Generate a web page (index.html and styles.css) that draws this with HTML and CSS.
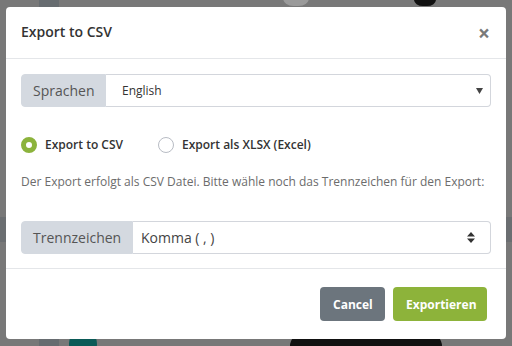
FILE: index.html
```html
<!DOCTYPE html>
<html lang="de">
<head>
    <meta charset="UTF-8">
    <meta name="viewport" content="width=device-width, initial-scale=1.0">
    <title>Export to CSV</title>
    <link rel="stylesheet" href="styles.css">
</head>
<body>

    <!-- page behind the overlay -->
    <div class="backdrop">
        <div class="bg-tab bg-tab-top"></div>
        <div class="bg-tab bg-tab-bottom"></div>
        <div class="bg-row"></div>
        <div class="bg-badge"></div>
        <div class="bg-photo bg-photo-a"></div>
        <div class="bg-photo bg-photo-b"></div>
        <div class="bg-photo bg-photo-c"></div>
    </div>

    <div class="modal">
        <div class="modal-header">
            <h5 class="modal-title">Export to CSV</h5>
            <span class="close">&times;</span>
        </div>

        <div class="modal-body">
            <div class="input-group">
                <span class="addon addon-lang">Sprachen</span>
                <div class="fake-select small-text">
                    <span>English</span>
                    <svg class="caret" width="7" height="6" viewBox="0 0 7 6"><path d="M0 0h7L3.5 6z" fill="#444"/></svg>
                </div>
            </div>

            <div class="radios">
                <label class="radio checked"><span class="dot"></span>Export to CSV</label>
                <label class="radio"><span class="dot"></span>Export als XLSX (Excel)</label>
            </div>

            <p class="hint">Der Export erfolgt als CSV Datei. Bitte wähle noch das Trennzeichen für den Export:</p>

            <div class="input-group">
                <span class="addon addon-sep">Trennzeichen</span>
                <div class="fake-select">
                    <span>Komma ( , )</span>
                    <svg class="caret" width="8" height="11" viewBox="0 0 8 11"><path d="M0 4.5h8L4 0z M0 6.5h8L4 11z" fill="#333"/></svg>
                </div>
            </div>
        </div>

        <div class="modal-footer">
            <button class="btn btn-cancel">Cancel</button>
            <button class="btn btn-export">Exportieren</button>
        </div>
    </div>

</body>
</html>
```

FILE: styles.css
```css
html, body {
    overflow: hidden;
}

body {
    font-family: 'Open Sans', 'Noto Sans', sans-serif;
    background-color: #787878;
    margin: 0;
    padding: 7px 6px;
    width: 512px;
    height: 346px;
    box-sizing: border-box;
    position: relative;
}

.backdrop {
    position: absolute;
    left: 0;
    top: 0;
    width: 512px;
    height: 346px;
    overflow: hidden;
}

.backdrop div {
    position: absolute;
}

.bg-tab {
    left: 39px;
    width: 20px;
    height: 10px;
    background-color: #676c70;
}

.bg-tab-top {
    top: 0;
}

.bg-tab-bottom {
    top: 336px;
}

.bg-row {
    left: 0;
    top: 217px;
    width: 512px;
    height: 25px;
    background-color: #6b6e71;
}

.bg-badge {
    left: 69px;
    top: 330px;
    width: 28px;
    height: 28px;
    border-radius: 50%;
    background-color: #0b5a57;
}

.bg-photo {
    border-radius: 40%;
    background-color: #111;
}

.bg-photo-a {
    left: 283px;
    top: -14px;
    width: 26px;
    height: 20px;
    background-color: #9a9a9a;
}

.bg-photo-b {
    left: 414px;
    top: -10px;
    width: 22px;
    height: 16px;
}

.bg-photo-c {
    left: 290px;
    top: 334px;
    width: 152px;
    height: 12px;
    border-radius: 30px 30px 0 0;
}

.modal {
    position: relative;
    width: 500px;
    height: 332px;
    background-color: #fff;
    border-radius: 4px;
    display: flex;
    flex-direction: column;
}

.modal-header {
    height: 51px;
    padding: 0 16px 0 15px;
    display: flex;
    align-items: center;
    justify-content: space-between;
    border-bottom: 1px solid #e4e6e9;
}

.modal-title {
    margin: -3px 0 0;
    font-size: 14px;
    font-weight: 600;
    color: #333;
}

.close {
    font-size: 21px;
    font-weight: bold;
    color: #7a7a7a;
    line-height: 1;
    margin-top: 1px;
}

.modal-body {
    padding: 15px 15px 14px;
    flex: 0 0 auto;
}

.input-group {
    display: flex;
    height: 33px;
    width: 470px;
    box-sizing: border-box;
}

.addon {
    background-color: #d4d9e0;
    color: #555;
    font-size: 14px;
    display: flex;
    align-items: center;
    border-radius: 4px 0 0 4px;
    border: 1px solid #d4d9e0;
    box-sizing: border-box;
}

.addon-lang {
    width: 85px;
    padding-left: 11px;
}

.addon-sep {
    width: 112px;
    padding-left: 11px;
}

.fake-select {
    flex: 1;
    display: flex;
    align-items: center;
    justify-content: space-between;
    border: 1px solid #d3d6dc;
    border-left: none;
    border-radius: 0 4px 4px 0;
    padding: 0 15px 0 8px;
    font-size: 14px;
    color: #444;
}

.small-text {
    font-size: 12px;
    padding-left: 16px;
    padding-right: 7px;
    color: #333;
}

.radios {
    display: flex;
    gap: 35px;
    margin-top: 29px;
    padding-left: 0;
}

.radio {
    display: flex;
    align-items: center;
    font-size: 12px;
    font-weight: 600;
    color: #333;
}

.dot {
    width: 16px;
    height: 16px;
    box-sizing: border-box;
    border-radius: 50%;
    border: 1px solid #b8bcc4;
    margin-right: 8px;
    background-color: #fff;
}

.checked .dot {
    border: 5px solid #8cb33c;
    background-color: #fff;
}

.hint {
    font-size: 12px;
    color: #6c6c6c;
    margin: 20px 0 31px;
}

.modal-footer {
    flex: 1;
    border-top: 1px solid #e4e6e9;
    display: flex;
    justify-content: flex-end;
    align-items: flex-start;
    gap: 8px;
    padding: 18px 19px 0 0;
}

.btn {
    font-family: 'Open Sans', 'Noto Sans', sans-serif;
    font-size: 12px;
    font-weight: bold;
    color: #fff;
    border: none;
    border-radius: 4px;
    height: 34px;
    padding: 0 13px;
    cursor: pointer;
}

.btn-cancel {
    background-color: #6c757d;
    width: 65px;
}

.btn-export {
    background-color: #8db33a;
    width: 94px;
}
```
